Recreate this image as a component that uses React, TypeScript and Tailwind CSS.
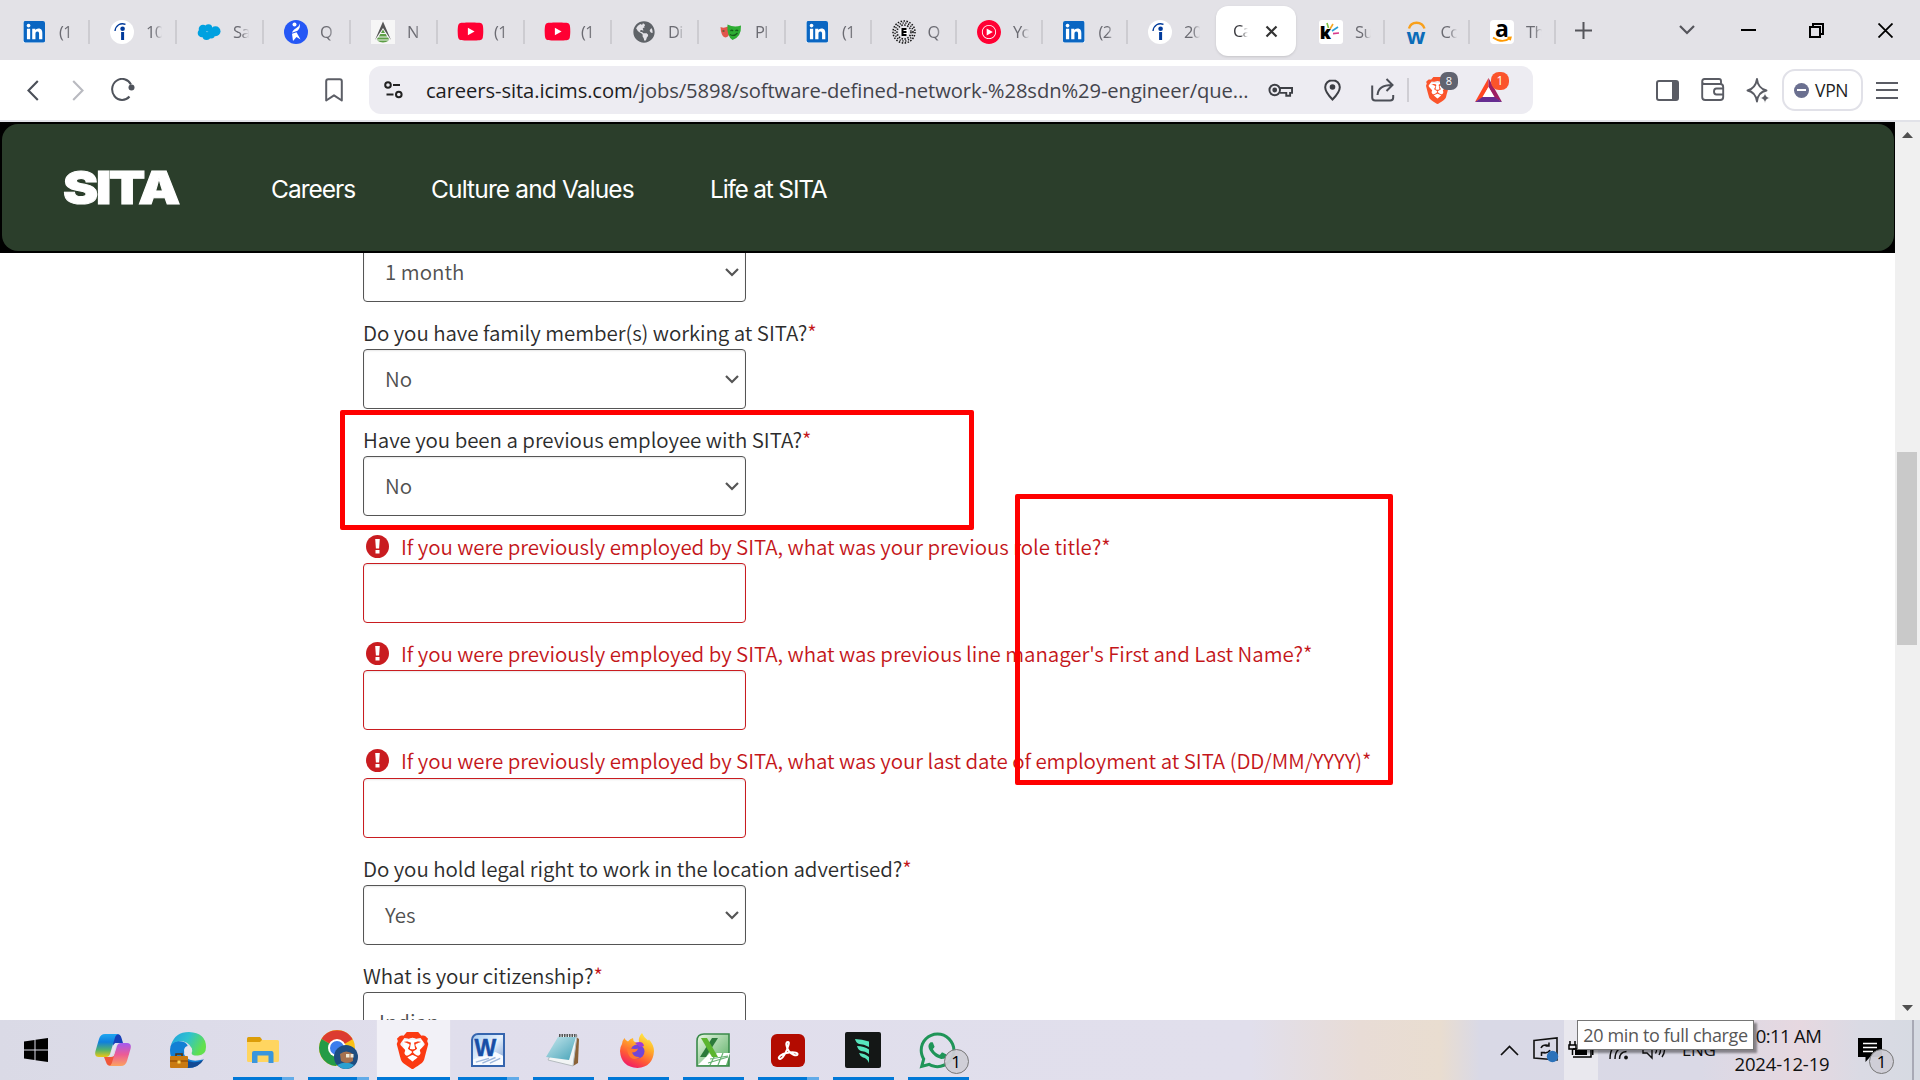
import React from "react";
import { FaLinkedin, FaYoutube, FaWhatsapp, FaGlobeAmericas } from "react-icons/fa";
import { SiBrave, SiYoutubemusic } from "react-icons/si";

const UI = "font-['Open_Sans',sans-serif]";
const FORM = "font-['Noto_Sans_CJK_SC',sans-serif] font-[350]";

/* ---------- tab favicons ---------- */
const LinkedIn = () => (
  <div className="w-6 flex justify-start">
    <div className="w-[22px] h-[22px] rounded-[2px] bg-white overflow-hidden flex items-center justify-center">
      <FaLinkedin size={25} color="#0a66c2" className="shrink-0" />
    </div>
  </div>
);
const Indeed = () => (
  <svg width="24" height="24" viewBox="0 0 24 24" className="shrink-0">
    <circle cx="12" cy="12" r="12" fill="#fff" />
    <circle cx="12.6" cy="8.8" r="2.3" fill="#003a9b" />
    <path d="M12.6 12v8" stroke="#003a9b" strokeWidth="3" />
    <path d="M5 11C5.800 5 10.500 2.500 15.500 4.300" stroke="#003a9b" strokeWidth="1.400" fill="none" />
  </svg>
);
const Salesforce = () => (
  <svg width="24" height="24" viewBox="0 0 24 24" fill="#00a1e0">
    <circle cx="6" cy="9" r="4.300" /><circle cx="11.5" cy="8" r="3.800" /><circle cx="18.500" cy="11.300" r="5" />
    <circle cx="5" cy="13" r="4.300" /><circle cx="9.500" cy="16" r="4" /><circle cx="14" cy="14.500" r="4" />
  </svg>
);
const BlueRunner = () => (
  <svg width="24" height="24" viewBox="0 0 24 24">
    <circle cx="12" cy="12" r="12" fill="#2557f5" />
    <circle cx="10.500" cy="4.500" r="2" fill="#fff" />
    <path d="M15.500 3.500C15 8.500 9.500 8 8 12.800L13.500 10.800C16 8.500 16.300 6 15.500 3.500Z M8 13.800L12.500 12.300L16.500 19.500L12.500 17L9 21Z" fill="#fff" />
  </svg>
);
const Pyramid = () => (
  <svg width="24" height="24" viewBox="0 0 24 24">
    <rect width="24" height="24" fill="#f6f6f6" />
    <path d="M12 1.500L20 20L12 8L4 20Z" fill="#555" />
    <path d="M12 9.500l2 3.500h-4zM9.300 14h5.400l1.400 2.500H7.900zM7 17.500h10l1.300 2H5.700zM6 20.500h12q-6 4-12 0z" fill="#5c9e45" />
  </svg>
);
const YouTube = () => (
  <div className="relative w-6 h-6 flex items-center justify-center">
    <div className="absolute w-3 h-3 bg-white" />
    <FaYoutube size={27} color="#ff0033" className="relative shrink-0" />
  </div>
);
const Globe = () => <FaGlobeAmericas size={22} color="#5f6368" />;
const Masks = () => (
  <svg width="24" height="24" viewBox="0 0 24 24">
    <path d="M1.500 7Q5 8.500 9 6.500L10 15Q8 18.500 5 17Q2 15 1.500 7Z" fill="#e2574c" />
    <path d="M8.500 4.500Q15 8 22 5.500Q22.500 17 13.500 20Q7.500 16 8.500 4.500Z" fill="#2ead33" />
    <path d="M3.500 11h2M11.500 11q1.300-1.600 2.600 0M16.500 11q1.300-1.600 2.600 0M11 14.500q4 2.500 7.500-1.500" stroke="#145c1b" strokeWidth="1.200" fill="none" />
  </svg>
);
const DotBadge = () => (
  <svg width="24" height="24" viewBox="0 0 24 24">
    {[11, 9, 7].map((r, k) => (
      <circle key={r} cx="12" cy="12" r={r} fill="none" stroke="#111" strokeWidth="1.500" strokeDasharray={k === 1 ? "1.200 1.700" : "1.500 1.500"} />
    ))}
    <circle cx="12" cy="12" r="4.500" fill="#fff" />
    <path d="M14.500 9H10.500v6h4M10.500 12h4" stroke="#000" strokeWidth="2" fill="none" />
  </svg>
);
const YtMusic = () => (
  <div className="w-6 h-6 rounded-full bg-white">
    <SiYoutubemusic size={24} color="#ff0033" />
  </div>
);
const Knime = () => (
  <div className="relative w-6 h-6 rounded-[3px] bg-white">
    <span className="absolute left-[1px] top-[1px] leading-[24px] text-[18px] font-black font-['Inter',sans-serif]">k</span>
    <svg className="absolute inset-0" width="24" height="24" viewBox="0 0 24 24" strokeWidth="1.600">
      <path d="M8 3l1.500 5" stroke="#7cc142" /><path d="M14 4l-3 5" stroke="#f5a623" /><path d="M19 7l-6 4" stroke="#2a9fd8" /><path d="M20 13l-6 .6" stroke="#d83a8c" />
    </svg>
  </div>
);
const Workday = () => (
  <div className="relative w-6 h-6">
    <span className="absolute left-[2px] top-[3px] leading-[24px] text-[22px] font-bold text-[#0b6cb8] font-['Open_Sans',sans-serif]">w</span>
    <svg className="absolute inset-0" width="24" height="24" viewBox="0 0 24 24">
      <path d="M4 8.500C6 .8 17 .8 19.500 8.500" stroke="#f8a01c" strokeWidth="2.400" fill="none" />
    </svg>
  </div>
);
const Amazon = () => (
  <div className="relative w-6 h-6 rounded-[4px] bg-white">
    <span className="absolute left-[5px] -top-[4px] leading-[24px] text-[23px] font-bold text-black font-['Open_Sans',sans-serif]">a</span>
    <svg className="absolute inset-0" width="24" height="24" viewBox="0 0 24 24">
      <path d="M3 17.500Q12 24 20 18.300M17.500 17.500l3.300-.2-.8 3" stroke="#ff9900" strokeWidth="1.700" fill="none" />
    </svg>
  </div>
);

const TabText = ({ text }: { text: string }) => (
  <div className="ml-[12px] w-[17px] overflow-hidden whitespace-nowrap text-[16.500px] tracking-[-0.6px] leading-6 text-[#6b6b72] [mask-image:linear-gradient(to_right,black_50%,transparent_95%)]">
    {text}
  </div>
);

const TabCell = ({ icon, text, wide }: { icon: React.ReactNode; text: string; wide?: boolean }) => (
  <div className={(wide ? "w-[87px]" : "w-[85.500px]") + " h-6 shrink-0 flex items-center border-r-2 border-[#cdccd1] pl-5"}>
    <div className="w-6 h-6 flex items-center justify-center shrink-0">{icon}</div>
    <TabText text={text} />
  </div>
);

const TabBar = () => (
  <div className="h-[60px] shrink-0 bg-[#e3e2e7] flex">
    <div className="flex items-center pl-[3px] pt-[3px] h-[60px]">
      <TabCell wide icon={<LinkedIn />} text="(1" />
      <TabCell wide icon={<Indeed />} text="10" />
      <TabCell wide icon={<Salesforce />} text="Sa" />
      <TabCell wide icon={<BlueRunner />} text="Q" />
      <TabCell wide icon={<Pyramid />} text="N" />
      <TabCell wide icon={<YouTube />} text="(1" />
      <TabCell wide icon={<YouTube />} text="(1" />
      <TabCell wide icon={<Globe />} text="Di" />
      <TabCell wide icon={<Masks />} text="Pl" />
      <TabCell icon={<LinkedIn />} text="(1" />
      <TabCell icon={<DotBadge />} text="Q" />
      <TabCell icon={<YtMusic />} text="Yo" />
      <TabCell icon={<LinkedIn />} text="(2" />
      <div className="w-[88px] h-6 shrink-0 flex items-center pl-5">
        <Indeed />
        <TabText text="20" />
      </div>
    </div>
    <div className="mt-[6px] w-[80px] h-[50px] rounded-[12px] bg-white shadow-sm flex items-center pl-[17px] shrink-0">
      <div className="w-[15px] overflow-hidden whitespace-nowrap text-[16.500px] tracking-[-0.8px] leading-6 text-[#3b3b40] [mask-image:linear-gradient(to_right,black_50%,transparent)]">Ca</div>
      <svg className="ml-[17px]" width="13" height="13" viewBox="0 0 13 13"><path d="M1.500 1.500l10 10M11.500 1.500l-10 10" stroke="#333" strokeWidth="2.200" /></svg>
    </div>
    <div className="flex items-center pt-[3px] h-[60px] ml-[3px]">
      <TabCell icon={<Knime />} text="Su" />
      <TabCell icon={<Workday />} text="Co" />
      <TabCell icon={<Amazon />} text="Th" />
      <svg className="ml-[19px] -mt-[2px]" width="17" height="17" viewBox="0 0 17 17"><path d="M8.500 0v17M0 8.500h17" stroke="#55555b" strokeWidth="2" /></svg>
    </div>
    <div className="ml-auto flex items-center pr-[27px]">
      <svg className="mr-[46px]" width="16" height="10" viewBox="0 0 16 10"><path d="M1 1l7 7 7-7" stroke="#55555b" strokeWidth="2.200" fill="none" /></svg>
      <div className="w-[15px] h-[2px] bg-black mr-[53px]" />
      <svg className="mr-[54px]" width="15" height="15" viewBox="0 0 15 15" fill="none" stroke="#000" strokeWidth="2"><path d="M1 4h10v10H1z" /><path d="M4 4V1h10v10h-3" /></svg>
      <svg width="15" height="15" viewBox="0 0 15 15"><path d="M.5.500l14 14M14.500.500l-14 14" stroke="#000" strokeWidth="1.800" /></svg>
    </div>
  </div>
);

const Bat = () => (
  <svg width="27" height="24" viewBox="0 0 27 24">
    <path d="M13.500 0L0 24l7.500-4L13.500 9z" fill="#ff4724" />
    <path d="M13.500 0L27 24l-7.500-4L13.500 9z" fill="#9e1f63" />
    <path d="M0 24h27l-7.500-5H7.500z" fill="#662d91" />
    <path d="M13.500 9L19.500 19h-12z" fill="#fff" />
  </svg>
);

const Toolbar = () => (
  <div className="h-[60px] shrink-0 bg-white flex items-center">
    <svg className="ml-[27px]" width="12" height="21" viewBox="0 0 12 21"><path d="M10.800 1L1.500 10.500 10.800 20" stroke="#4b4f58" strokeWidth="2.100" fill="none" /></svg>
    <svg className="ml-[33px]" width="12" height="21" viewBox="0 0 12 21"><path d="M1.200 1l9.300 9.500L1.200 20" stroke="#b9bac0" strokeWidth="2.100" fill="none" /></svg>
    <svg className="ml-[27px]" width="24" height="24" viewBox="0 0 24 24"><path d="M18.500 18.500A10 10.500 0 1 1 20 6.500" stroke="#4f535b" strokeWidth="2" fill="none" /><circle cx="20.500" cy="9.500" r="3" fill="#4f535b" /></svg>
    <svg className="ml-[190px]" width="18" height="24" viewBox="0 0 18 24"><path d="M1.200 22.500V3.200Q1.200 1.200 3.200 1.200h11.600q2 0 2 2v19.300L9 17.300z" stroke="#5c5e66" strokeWidth="2" strokeLinejoin="round" fill="none" /></svg>
    <div className="ml-[26px] w-[1164px] h-12 rounded-[12px] bg-[#edecf2] flex items-center shrink-0">
      <svg className="ml-[15px]" width="19" height="18" viewBox="0 0 19 18" fill="none" stroke="#222" strokeWidth="2"><circle cx="4" cy="4" r="2.800" /><path d="M9 4h7M2.500 13.500h7" /><circle cx="14.800" cy="13.500" r="2.800" /></svg>
      <div className="ml-[23px] w-[823px] whitespace-nowrap text-[20.200px] leading-7 tracking-[-0.09px] text-[#44444c]">
        <span className="text-[#1d1d22]">careers-sita.icims.com</span>/jobs/5898/software-defined-network-%28sdn%29-engineer/que...
      </div>
      <svg className="ml-[19px]" width="25" height="16" viewBox="0 0 26 16" fill="none" stroke="#3d3f45" strokeWidth="2"><circle cx="7" cy="8" r="5.500" /><circle cx="7" cy="8" r="1.500" fill="#3d3f45" /><path d="M12.500 6H25v5h-2v3h-4v-3h-6.500" /></svg>
      <svg className="ml-[31px]" width="17" height="22" viewBox="0 0 17 22"><path d="M8.500 1.200C4.300 1.200 1.200 4.300 1.200 8.200 1.200 13 8.500 20.500 8.500 20.500S15.800 13 15.800 8.200C15.800 4.300 12.700 1.200 8.500 1.200z" fill="none" stroke="#3d3f45" strokeWidth="2" /><circle cx="8.500" cy="8" r="2.800" fill="#3d3f45" /></svg>
      <svg className="ml-[30px]" width="24" height="24" viewBox="0 0 24 24" fill="none" stroke="#4b4e56" strokeWidth="2"><path d="M1.200 7.500v12q0 3 3 3h15q3 0 3-3V17" /><path d="M6.500 17C7 10 12 7 21 7M15.500 1l6 6-6 6" /></svg>
      <div className="ml-[12px] w-[2px] h-6 bg-[#cfced4]" />
      <div className="relative ml-[15px] w-[25px] h-7 flex items-center">
        <svg className="absolute left-0 top-[2px]" width="24" height="26" viewBox="0 0 24 26"><path d="M4 5h16l-1 12-7 6-7-6z" fill="#fff" /></svg>
        <SiBrave size={27} color="#fb542b" className="relative shrink-0" />
        <div className="absolute left-[16px] -top-[4px] w-[18px] h-[18px] rounded-[7px] bg-[#606370] text-white text-[11px] leading-[18px] text-center">8</div>
      </div>
      <div className="relative ml-[26px] w-[27px] h-6">
        <Bat />
        <div className="absolute left-[16px] -top-[6px] w-[18px] h-[18px] rounded-[8px] bg-[#fb542b] text-white text-[12px] leading-[18px] text-center">1</div>
      </div>
    </div>
    <div className="ml-auto pr-[22px] flex items-center">
      <svg width="23" height="21" viewBox="0 0 23 21"><rect x="1" y="1" width="21" height="19" rx="2" fill="none" stroke="#5a5c64" strokeWidth="2" /><path d="M16 1h6v19h-6z" fill="#5a5c64" /></svg>
      <svg className="ml-[22px]" width="24" height="24" viewBox="0 0 24 24" fill="none" stroke="#5a5c64" strokeWidth="1.900"><path d="M1.200 3.500v15.500q0 3 3 3h15q3 0 3-3V9q0-3-3-3H3.500Q1.200 6 1.200 3.500q0-2.500 2.300-2.500H18q2 0 2 2v3" /><path d="M23 10.500h-7.500q-2.500 0-2.500 3t2.500 3H23" /></svg>
      <svg className="ml-[21px]" width="24" height="27" viewBox="0 0 24 27"><path d="M11 2Q12 11.500 20.500 13.500 12 15 11 24.500 9.500 15 1.500 13.500 9.500 11.500 11 2z" fill="none" stroke="#5a5c64" strokeWidth="1.900" strokeLinejoin="round" /><path d="M19 16q.7 4.300 5 5-4.300.700-5 5-.7-4.300-5-5 4.300-.7 5-5z" fill="#5a5c64" stroke="#fff" strokeWidth=".6" /></svg>
      <div className="ml-[12px] w-[81px] h-[42px] rounded-[13px] border-2 border-[#e1e1e8] flex items-center">
        <div className="ml-[10px] w-[15px] h-[15px] rounded-full bg-[#6b7090] flex items-center justify-center"><div className="w-[9px] h-[2px] bg-white" /></div>
        <span className="ml-[6px] text-[17.500px] leading-6 text-[#1d1d22] tracking-[-0.3px]">VPN</span>
      </div>
      <div className="ml-[13px] w-[22px] h-[17px] flex flex-col justify-between">
        <div className="h-[2px] bg-[#5a5c64]" /><div className="h-[2px] bg-[#5a5c64]" /><div className="h-[2px] bg-[#5a5c64]" />
      </div>
    </div>
  </div>
);

const SiteHeader = () => (
  <div className="h-[131px] shrink-0 bg-black pt-[2px] pb-[2px] pl-[2px] pr-[1px]">
    <div className="h-full rounded-[16px] bg-[#2b3e2b] flex items-center text-white font-['Inter',sans-serif]">
      <div className="ml-[61px] w-[120px] flex shrink-0">
        <span className="inline-block origin-left scale-x-[1.15] text-[46px] leading-[60px] font-black tracking-[-2px] [-webkit-text-stroke:1px_white] -mt-[2px]">SITA</span>
      </div>
      <span className="ml-[88px] mt-[2px] w-[160px] whitespace-nowrap text-[24.500px] tracking-[-1px] leading-8">Careers</span>
      <span className="mt-[2px] w-[279px] whitespace-nowrap text-[24.500px] tracking-[-0.86px] leading-8">Culture and Values</span>
      <span className="mt-[2px] whitespace-nowrap text-[24.500px] tracking-[-1.200px] leading-8">Life at SITA</span>
    </div>
  </div>
);

const Label = ({ text, error, tall }: { text: string; error?: boolean; tall?: boolean }) => (
  <div className={(tall ? "h-[48px] pb-[3px]" : "h-[47px] pb-[2px]") + " flex items-end whitespace-nowrap text-[20.500px] tracking-[-0.055px] leading-[30px] " + (error ? "text-[#c4161a]" : "text-[#2c2c2c]")}>
    {error && (
      <svg className="ml-[3px] mr-[12px] mb-[3px] shrink-0" width="23" height="23" viewBox="0 0 23 23">
        <circle cx="11.500" cy="11.500" r="11.500" fill="#c91c20" />
        <path d="M9.200 4h4.600l-.7 9.500h-3.200zM9.500 15h4v3.600h-4z" fill="#fff" />
      </svg>
    )}
    <span>{text}<span className="text-[#c4161a]">*</span></span>
  </div>
);

const SelectBox = ({ value }: { value: string }) => (
  <div className="w-[383px] h-[60px] rounded-[4px] border border-[#555] shadow-[inset_0_1px_2px_rgba(0,0,0,0.1)] flex items-center justify-between pl-[21px] pr-[6px] text-[20.500px] leading-[30px] text-[#505050]">
    <span className="-mt-[2px]">{value}</span>
    <svg width="14" height="9" viewBox="0 0 14 9"><path d="M1 1l6 6 6-6" stroke="#555" strokeWidth="2.200" fill="none" /></svg>
  </div>
);

const TextBox = () => <div className="w-[383px] h-[60px] rounded-[4px] border border-[#c91c20] shadow-[inset_0_1px_2px_rgba(0,0,0,0.1)]" />;

const Page = () => (
  <div className="h-[898px] shrink-0 flex">
    <div className="relative w-[1895px] flex flex-col overflow-hidden bg-white">
      <SiteHeader />
      <div className="flex-1 overflow-hidden">
        <div className={"-mt-[11px] ml-[363px] " + FORM}>
          <SelectBox value="1 month" />
          <Label text="Do you have family member(s) working at SITA?" />
          <SelectBox value="No" />
          <Label text="Have you been a previous employee with SITA?" />
          <SelectBox value="No" />
          <Label error text="If you were previously employed by SITA, what was your previous role title?" />
          <TextBox />
          <Label error text="If you were previously employed by SITA, what was previous line manager's First and Last Name?" />
          <TextBox />
          <Label error tall text="If you were previously employed by SITA, what was your last date of employment at SITA (DD/MM/YYYY)" />
          <TextBox />
          <Label text="Do you hold legal right to work in the location advertised?" />
          <SelectBox value="Yes" />
          <Label text="What is your citizenship?" />
          <div className="w-[383px] h-[60px] rounded-[4px] border border-[#555] pl-[15px] pt-[13px] text-[20.500px] leading-[30px] text-[#505050]">Indian</div>
        </div>
      </div>
      <div className="absolute left-[340px] top-[288px] w-[634px] h-[120px] border-[5px] border-[#ff0000] rounded-[2px]" />
      <div className="absolute left-[1015px] top-[372px] w-[378px] h-[291px] border-[5px] border-[#ff0000] rounded-[2px]" />
    </div>
    <div className="w-[25px] bg-[#f0f0f0] flex flex-col items-center">
      <svg className="mt-[10px]" width="11" height="6" viewBox="0 0 11 6"><path d="M5.500 0L11 6H0z" fill="#505050" /></svg>
      <div className="mt-[314px] mr-px w-[20px] h-[193px] bg-[#c9c9c9]" />
      <svg className="mt-auto mb-[9px]" width="11" height="6" viewBox="0 0 11 6"><path d="M5.500 6L11 0H0z" fill="#505050" /></svg>
    </div>
  </div>
);

/* ---------- taskbar ---------- */
const WinLogo = () => (
  <svg width="24" height="24" viewBox="0 0 24 24"><path d="M0 3.400L10.500 2v9.500H0zM11.500 1.800L24 0v11.500H11.500zM0 12.500h10.500V22L0 20.600zM11.500 12.500H24V24l-12.500-1.800z" /></svg>
);
const Copilot = () => (
  <svg width="36" height="34" viewBox="0 0 36 34">
    <defs>
      <linearGradient id="cpA" x1="0" y1="0" x2="0" y2="1"><stop offset="0" stopColor="#1fa7f0" /><stop offset=".35" stopColor="#0f7fdd" /><stop offset=".7" stopColor="#55b36a" /><stop offset="1" stopColor="#ecc813" /></linearGradient>
      <linearGradient id="cpB" x1="0" y1="0" x2="0" y2="1"><stop offset="0" stopColor="#a35bf0" /><stop offset=".5" stopColor="#ec5b96" /><stop offset="1" stopColor="#fba35f" /></linearGradient>
    </defs>
    <path d="M17 1h5q3.500 0 4.500 4l1.500 5h-6q-3 0-4 3z" fill="#1740b8" />
    <path d="M9 24h7q3 0 4-3l1-3 3 15h-8q-4 0-5-4z" fill="#f0573a" />
    <path d="M10 1h14q-3 0-4 3.500L15 21q-1 3-4 3H4q-5 0-3.500-6L4 6q1.500-5 6-5z" fill="url(#cpA)" />
    <path d="M26 33H13q3 0 4-3.500l5-16.500q1-3 4-3h6q5 0 3.500 6L32 28q-1.500 5-6 5z" fill="url(#cpB)" />
    <path d="M20.500 10q-2 1-2.500 3.500L15 23.500q2.500-.5 3.500-3.500L22 10z" fill="#e6e4f0" />
  </svg>
);
const Edge = () => (
  <svg width="36" height="36" viewBox="0 0 36 36">
    <defs>
      <linearGradient id="edA" x1="0" y1="0" x2="1" y2=".4"><stop offset="0" stopColor="#1f9fe0" /><stop offset=".5" stopColor="#2fc2cf" /><stop offset="1" stopColor="#62e04c" /></linearGradient>
    </defs>
    <path d="M0 18Q0 9 8 9 17 9 18 15 12 19 15 24 20 31 33 27.500 28 36 18 36 0 36 0 18z" fill="#127fd4" />
    <path d="M12 19Q12 29 22 30 29 31 34 27 29 36 18 36 10 30 12 19z" fill="#124a94" />
    <path d="M1 13Q5 0 19 0 36 1 36 15 36 23 28 23.500 21 24 21.500 21 23 19 21.500 16 18 9 10 9 4 9.500 1 13z" fill="url(#edA)" />
    <path d="M14 18q1-4.500 5-4 3.500 1.500 3 5-1 2-.5 3 3 4 12 1.500-1.500 4-8 4.500-11 0-11.500-10z" fill="#e6e4f0" />
    <rect x="0" y="24" width="18" height="12" rx="1" fill="#c97a12" /><path d="M0 29h18" stroke="#9a5306" strokeWidth="1.500" /><path d="M6 24v-2h6v2" stroke="#5b3205" strokeWidth="1.500" fill="none" /><rect x="7.500" y="28.500" width="3" height="3" fill="#ffd75a" />
  </svg>
);
const Folder = () => (
  <svg width="32" height="27" viewBox="0 0 32 27">
    <path d="M0 1.500Q0 0 1.500 0H13l2 2.500V10H0z" fill="#dc9d08" />
    <path d="M0 5h13l2-2h15.500Q32 3 32 4.500v19Q32 25 30.500 25h-29Q0 25 0 23.500z" fill="#ffd560" />
    <path d="M5 26V16q0-2 2-2h17.500q2 0 2 2v10h-5v-7.500h-11V26z" fill="#3a96dd" />
  </svg>
);
const Chrome = () => (
  <svg width="40" height="40" viewBox="0 0 40 40" className="ml-[3px]">
    <circle cx="18" cy="18" r="18" fill="#fbc116" />
    <path d="M18 18L2.500 9A18 18 0 0 1 33.600 9.200z" fill="#dc3b30" />
    <path d="M18 18L2.500 9A18 18 0 0 0 17 36L26 22z" fill="#259b46" />
    <circle cx="18" cy="18" r="9" fill="#fff" /><circle cx="18" cy="18" r="7" fill="#3b7ded" />
    <circle cx="27" cy="27" r="12" fill="#1e4d80" /><path d="M18 35q9-5 17 0-8 8-17 0z" fill="#2ba0d0" />
    <path d="M21 24q6-5 13 0v7q-6 4-12 0z" fill="#a5714f" /><rect x="27" y="24" width="3.500" height="3.500" fill="#f2ead8" /><rect x="31.500" y="24" width="3" height="3.500" fill="#f2ead8" />
  </svg>
);
const BraveBig = () => (
  <div className="relative w-[36px] h-[36px] flex items-center justify-center">
    <svg className="absolute" width="30" height="32" viewBox="0 0 30 32"><path d="M5 6h20l-1 14-9 8-9-8z" fill="#fff" /></svg>
    <SiBrave size={37} color="#fb3a12" className="relative shrink-0" />
  </div>
);
const Word = () => (
  <div className="relative w-[34px] h-[34px] border-2 border-[#3565ae] rounded-tl-[7px] bg-gradient-to-br from-[#a9cdf2] via-[#e8f2fc] to-[#7c9dd0]">
    <svg className="absolute inset-0" width="30" height="30" viewBox="0 0 32 32"><path d="M0 26l24-8 8 4v10H0z" fill="#f8fbff" /><path d="M3 29l14-4M10 30l14-6M18 30l11-5" stroke="#9db7dc" strokeWidth="1.500" /></svg>
    <span className="absolute left-[2px] top-[-3px] text-[23px] leading-[32px] font-black text-[#174ea6] tracking-tighter font-['Liberation_Sans',sans-serif] [-webkit-text-stroke:0.500px_#174ea6]">W</span>
  </div>
);
const Notepad = () => (
  <svg width="34" height="34" viewBox="0 0 34 34">
    <path d="M30 4l3 2-1 24-5 3z" fill="#8a6236" />
    <path d="M14 2h17l-4 31-25-6z" fill="#f2f5f5" stroke="#b5bcc0" />
    <defs><linearGradient id="np" x1="0" y1="0" x2="1" y2="1"><stop offset="0" stopColor="#c8e8ee" /><stop offset="1" stopColor="#46a3b8" /></linearGradient></defs>
    <path d="M12 4h18l-7 23L0 24z" fill="url(#np)" />
    <path d="M13 2.500h18" stroke="#555" strokeWidth="3" strokeDasharray="1.500 1" />
  </svg>
);
const Firefox = () => (
  <svg width="35" height="35" viewBox="0 0 35 35">
    <defs><linearGradient id="ff" x1=".8" y1="0" x2=".3" y2="1"><stop offset="0" stopColor="#fff24a" /><stop offset=".35" stopColor="#ffb02a" /><stop offset=".7" stopColor="#ff5a36" /><stop offset="1" stopColor="#f0186a" /></linearGradient></defs>
    <path d="M2 11q0-3 2.500-6 1 3 3.500 3.500 2-3 5-3.500 0 3 2 4l4 1Q18 4 22 0q2 5 6 7.500l1-1Q34 12 34 18 33 34 17.500 35 1 34 0 18 0 14 2 11z" fill="url(#ff)" />
    <circle cx="17.500" cy="18.500" r="7" fill="#7246d8" />
    <path d="M7 14q6 3 11 1.500-1 4-6 4 2 5 8 4.500-6 4-10 0-3-4-3-10z" fill="#ff7a2f" />
    <path d="M15 10q8-3 9 3l-4 1z" fill="#a03ad8" />
  </svg>
);
const Excel = () => (
  <svg width="34" height="34" viewBox="0 0 34 34">
    <defs><linearGradient id="xl" x1="0" y1="0" x2="1" y2="1"><stop offset="0" stopColor="#eaf7e4" /><stop offset="1" stopColor="#55ad60" /></linearGradient></defs>
    <path d="M1 8Q1 1 8 1h25v32H1z" fill="url(#xl)" stroke="#3a8a4a" strokeWidth="1.600" />
    <path d="M2 32l12-12 20 0-4 12z" fill="#fff" /><path d="M12 30l20-6M14 26l18-3M20 20l-6 12M27 20l-5 12" stroke="#69b374" strokeWidth="1.200" />
    <path d="M16 5h6L10 24H4z" fill="#2c7a3a" /><path d="M5 5h6l11 19h-6z" fill="#5cb52e" />
  </svg>
);
const Acrobat = () => (
  <svg width="34" height="33" viewBox="0 0 34 33">
    <rect width="34" height="33" rx="6" fill="#b30b00" />
    <path d="M17 8c-3 0-1.500 5 .5 8.500 2.500 4 8 6 9 4 1-2.500-6-2.500-11-1.500-5 1-8.500 4-7.500 5.500 1.500 2 6-3 7.800-8.500C17 12 19 8 17 8z" fill="none" stroke="#fff" strokeWidth="2" />
  </svg>
);
const Wing = () => (
  <svg width="36" height="36" viewBox="0 0 36 36">
    <rect width="36" height="36" rx="2" fill="#141716" />
    <g fill="#57e5bd"><path d="M10 7q7 0 14 2.500V15q-5-3-10-3-3-1-4-5z" /><path d="M12 14q7 0 12 3.500V22q-4-3-8-3-3-1-4-5z" /><path d="M14 21q6 .5 10 4v6q-2-5-6-5.500-3-1-4-4.500z" /></g>
  </svg>
);
const WhatsApp = () => (
  <div className="relative w-9 h-9">
    <FaWhatsapp size={41} color="#1f9558" className="absolute -left-[2.500px] -top-[2.500px]" />
    <div className="absolute left-[24px] top-[17px] w-[25px] h-[25px] rounded-full border border-[#777] bg-[#cfced6]/95 text-center text-[17px] leading-[23px] text-black">1</div>
  </div>
);

const Task = ({ children, bar }: { children: React.ReactNode; bar?: "single" | "group" | "active" }) => (
  <div className={"w-[75px] h-[60px] shrink-0 flex flex-col items-center justify-end " + (bar === "active" ? "bg-[#f2f1f7] border-x border-[#e2e0ec]" : "")}>
    <div className="h-[57px] flex items-center justify-center pt-[3px] pr-[2px]">{children}</div>
    <div className="h-[3px] w-full flex justify-center">
      {bar === "single" && <div className="w-[61px] bg-[#0078d7]" />}
      {bar === "group" && (<><div className="w-[49px] bg-[#0078d7]" /><div className="w-[12px] bg-[#62abe8]" /></>)}
      {bar === "active" && <div className="w-full bg-[#0078d7]" />}
    </div>
  </div>
);

const Taskbar = () => (
  <div className="h-[60px] shrink-0 flex bg-[linear-gradient(to_right,#dadae6_0px,#e0deec_400px,#e1dfec_1250px,#e8dcd6_1360px,#e9ddd0_1440px,#d9d9e6_1480px,#dad9e6_1700px,#e6d8e0_1800px,#dadae4_1860px,#d6dae2_1920px)]">
    <div className="w-[76px] h-[60px] flex items-center justify-center pr-[4px]"><WinLogo /></div>
    <Task><Copilot /></Task>
    <Task><Edge /></Task>
    <Task bar="group"><Folder /></Task>
    <Task bar="group"><Chrome /></Task>
    <Task bar="active"><BraveBig /></Task>
    <Task bar="group"><Word /></Task>
    <Task bar="single"><Notepad /></Task>
    <Task bar="single"><Firefox /></Task>
    <Task bar="single"><Excel /></Task>
    <Task bar="group"><Acrobat /></Task>
    <Task bar="single"><Wing /></Task>
    <Task bar="single"><WhatsApp /></Task>
    <div className="ml-auto flex items-center h-[60px]">
      <svg width="19" height="11" viewBox="0 0 19 11"><path d="M1 10l8.500-8.500L18 10" stroke="#111" strokeWidth="1.700" fill="none" /></svg>
      <svg className="ml-[14px]" width="26" height="26" viewBox="0 0 26 26"><path d="M1 3.500L24 1v22L1 21z" fill="none" stroke="#111" strokeWidth="1.600" /><path d="M8 11q2-4 8-2.500M16 5.500v3.500h-3.500M17 13q-2 4-8 2.500M8.500 19v-3.500H12" stroke="#111" strokeWidth="1.500" fill="none" /><circle cx="19.500" cy="19.500" r="5.700" fill="#2b72ba" /></svg>
      <div className="relative ml-[5px] w-[34px] h-[60px] bg-[#e9e8ee]">
        <svg className="absolute left-[4px] top-[20px]" width="26" height="20" viewBox="0 0 26 20"><path d="M2 1v4M7 1v4M1 5h7v4H1zM4.500 9v6" stroke="#000" strokeWidth="1.500" fill="none" /><path d="M5 9h18v8H5" fill="none" stroke="#000" strokeWidth="1.500" /><path d="M7 10h12v5H7zM24 10h1.500v5H24z" fill="#000" /></svg>
        <div className="absolute left-[13px] top-0 w-[177px] h-[30px] border border-[#767676] bg-white shadow-[3px_3px_2px_rgba(0,0,0,0.4)] z-10 text-[#575757] text-[18px] tracking-[-0.35px] leading-[29px] whitespace-nowrap text-center">20 min to full charge</div>
      </div>
      <svg className="ml-[11px]" width="20" height="20" viewBox="0 0 20 20" fill="none" stroke="#111" strokeWidth="1.400"><path d="M1 19Q1 2 18 1M6 19Q6 7 18 6.500M10.500 19q0-7 7-7.500" /><circle cx="17" cy="17.500" r="1.200" fill="#111" /></svg>
      <svg className="ml-[13px]" width="24" height="20" viewBox="0 0 24 20" fill="none" stroke="#111" strokeWidth="1.400"><path d="M1 7h4l5-5v16l-5-5H1zM13.500 7q2 3 0 6.500M17 5q3 5 0 10M20 3q5 7 0 14" /></svg>
      <span className="ml-[16px] w-[34px] text-[17px] leading-6 text-[#111] tracking-[-0.4px]">ENG</span>
      <div className="ml-[16px] w-[100px] flex flex-col items-center text-[18.500px] leading-[28px] text-[#111] whitespace-nowrap tracking-[-0.15px] -mt-[1px]">
        <span className="tracking-[-0.6px] pl-[3px]">10:11 AM</span>
        <span>2024-12-19</span>
      </div>
      <div className="relative ml-[26px] w-6 h-6">
        <svg width="24" height="24" viewBox="0 0 24 24"><path d="M0 0h24v19H12l-4.500 5v-5H0z" /><path d="M5 5.500h14M5 9.500h14M5 13.500h10" stroke="#fff" strokeWidth="1.300" /></svg>
        <div className="absolute left-[11px] top-[11px] w-[25px] h-[25px] rounded-full border border-[#777] bg-[#cfced6]/95 text-center text-[17px] leading-[23px] text-black">1</div>
      </div>
      <div className="ml-[30px] w-[8px] h-[60px] border-l-2 border-[#a8a9b5]" />
    </div>
  </div>
);

export default function App() {
  return (
    <div className={"w-[1920px] h-[1080px] overflow-hidden flex flex-col bg-white " + UI}>
      <TabBar />
      <Toolbar />
      <div className="h-[2px] shrink-0 bg-[#e1e2e8]" />
      <Page />
      <Taskbar />
    </div>
  );
}
